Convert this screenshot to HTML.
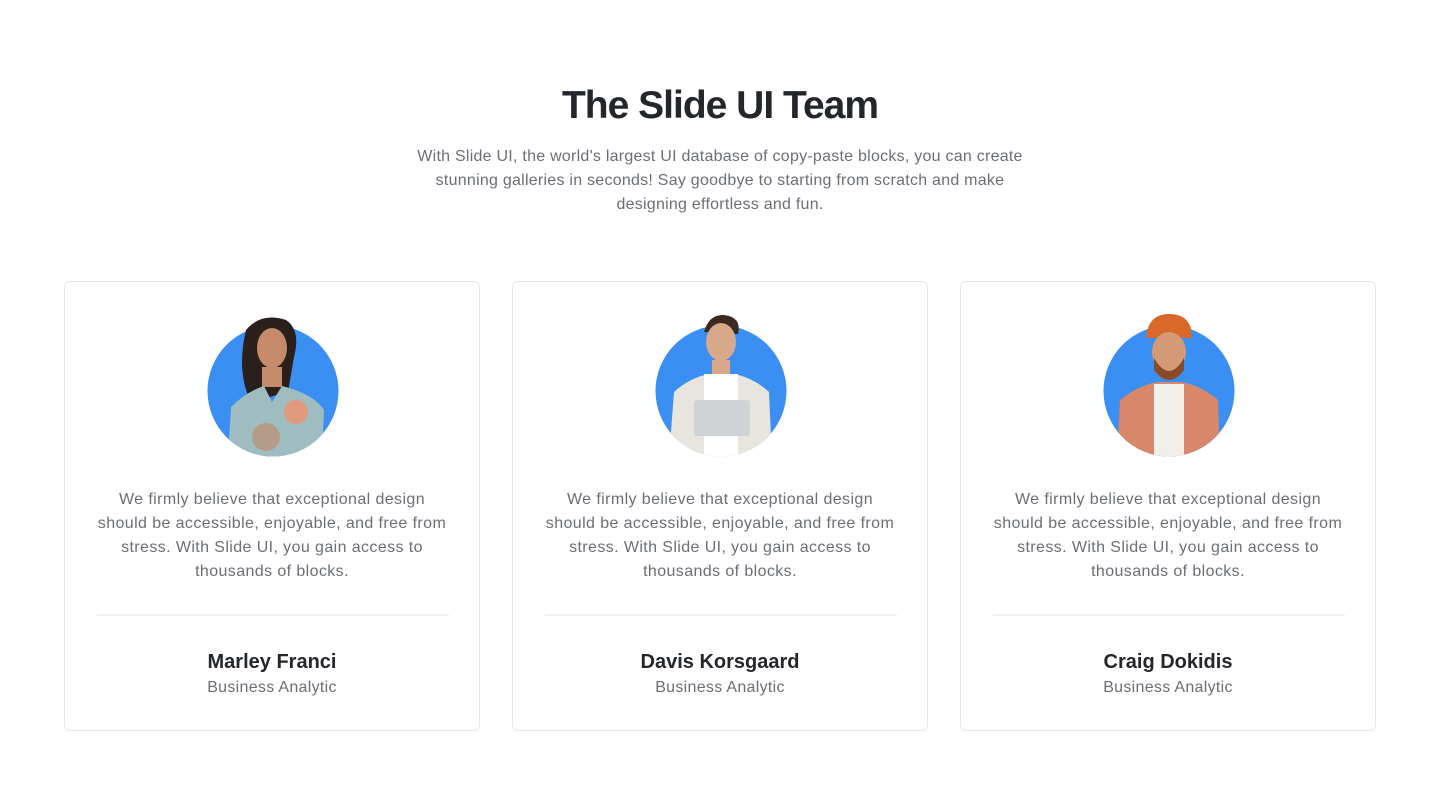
<!DOCTYPE html>
<html><head><meta charset="utf-8"><style>
body{margin:0;width:1440px;height:811px;background:#fff;font-family:"Liberation Sans",Arial,sans-serif;position:relative;overflow:hidden}
h1{position:absolute;top:81px;left:0;width:1440px;text-align:center;margin:0;font-size:39px;font-weight:700;color:#23262b;letter-spacing:-1px;line-height:50px}
.sub{position:absolute;top:145px;left:320px;width:800px;text-align:center;font-size:16px;line-height:24px;color:#6b6f75;white-space:nowrap;letter-spacing:0.25px}
.card{position:absolute;top:281px;width:414px;height:448px;border:1px solid #e6e7e9;border-radius:6px;box-sizing:content-box}
.card svg{position:absolute;left:141px;top:30px}
.txt{position:absolute;top:206px;left:0;width:414px;text-align:center;font-size:16px;line-height:24px;color:#6b6f75;white-space:nowrap;letter-spacing:0.4px}
.hr{position:absolute;top:332px;left:32px;width:352px;height:2px;background:#f1f2f3}
.nm{position:absolute;top:369px;width:100%;text-align:center;font-size:20px;font-weight:700;color:#23262b}
.rl{position:absolute;top:397px;width:100%;text-align:center;font-size:16px;color:#6b6f75;letter-spacing:0.3px}
</style></head><body>
<h1>The Slide UI Team</h1>
<div class="sub">With Slide UI, the world's largest UI database of copy-paste blocks, you can create<br>stunning galleries in seconds! Say goodbye to starting from scratch and make<br>designing effortless and fun.</div>

<div class="card" style="left:64px">
<svg width="134" height="146" viewBox="0 0 134 146"><defs><clipPath id="c1"><circle cx="67" cy="79" r="65.5"/><rect x="0" y="0" width="134" height="79"/></clipPath></defs>
<circle cx="67" cy="79" r="65.5" fill="#3b8ef2"/>
<g clip-path="url(#c1)"><path d="M40 18 Q55 0 80 8 Q95 18 88 45 L82 80 L45 90 Q30 60 40 18Z" fill="#2a1f1a"/>
<ellipse cx="66" cy="36" rx="15" ry="20" fill="#c48c6a"/><path d="M56 55 h20 v20 h-20z" fill="#c48c6a"/>
<path d="M22 146 L25 95 Q40 80 58 74 L66 90 L76 74 Q108 82 118 98 L116 146Z" fill="#9fbcc0"/><circle cx="90" cy="100" r="12" fill="#e29a7c"/><circle cx="60" cy="125" r="14" fill="#b49c88"/></g></svg>
<div class="txt">We firmly believe that exceptional design<br>should be accessible, enjoyable, and free from<br>stress. With Slide UI, you gain access to<br>thousands of blocks.</div>
<div class="hr"></div><div class="nm">Marley Franci</div><div class="rl">Business Analytic</div></div>

<div class="card" style="left:512px">
<svg width="134" height="146" viewBox="0 0 134 146"><defs><clipPath id="c2"><circle cx="67" cy="79" r="65.5"/><rect x="0" y="0" width="134" height="79"/></clipPath></defs>
<circle cx="67" cy="79" r="65.5" fill="#3b8ef2"/>
<g clip-path="url(#c2)"><path d="M50 20 Q55 2 70 3 Q88 5 84 22Z" fill="#3a2a20"/><ellipse cx="67" cy="30" rx="15" ry="19" fill="#d7a98a"/><path d="M58 48 h18 v16 h-18z" fill="#d7a98a"/>
<path d="M15 146 L20 80 Q35 66 55 62 L80 62 Q100 66 115 80 L118 146Z" fill="#e8e4de"/><rect x="50" y="62" width="34" height="84" fill="#fff"/><rect x="40" y="88" width="56" height="36" rx="3" fill="#d0d3d6"/></g></svg>
<div class="txt">We firmly believe that exceptional design<br>should be accessible, enjoyable, and free from<br>stress. With Slide UI, you gain access to<br>thousands of blocks.</div>
<div class="hr"></div><div class="nm">Davis Korsgaard</div><div class="rl">Business Analytic</div></div>

<div class="card" style="left:960px">
<svg width="134" height="146" viewBox="0 0 134 146"><defs><clipPath id="c3"><circle cx="67" cy="79" r="65.5"/><rect x="0" y="0" width="134" height="79"/></clipPath></defs>
<circle cx="67" cy="79" r="65.5" fill="#3b8ef2"/>
<g clip-path="url(#c3)"><path d="M44 26 Q46 2 67 2 Q90 2 90 26Z" fill="#d9682a"/><ellipse cx="67" cy="40" rx="17" ry="20" fill="#d49a78"/><path d="M52 46 Q67 72 82 46 L82 58 Q67 78 52 58Z" fill="#8a4a28"/>
<path d="M15 146 L18 88 Q35 74 55 70 L80 70 Q100 74 116 88 L118 146Z" fill="#d8876a"/><rect x="52" y="72" width="30" height="74" fill="#f1efe9"/></g></svg>
<div class="txt">We firmly believe that exceptional design<br>should be accessible, enjoyable, and free from<br>stress. With Slide UI, you gain access to<br>thousands of blocks.</div>
<div class="hr"></div><div class="nm">Craig Dokidis</div><div class="rl">Business Analytic</div></div>
</body></html>
